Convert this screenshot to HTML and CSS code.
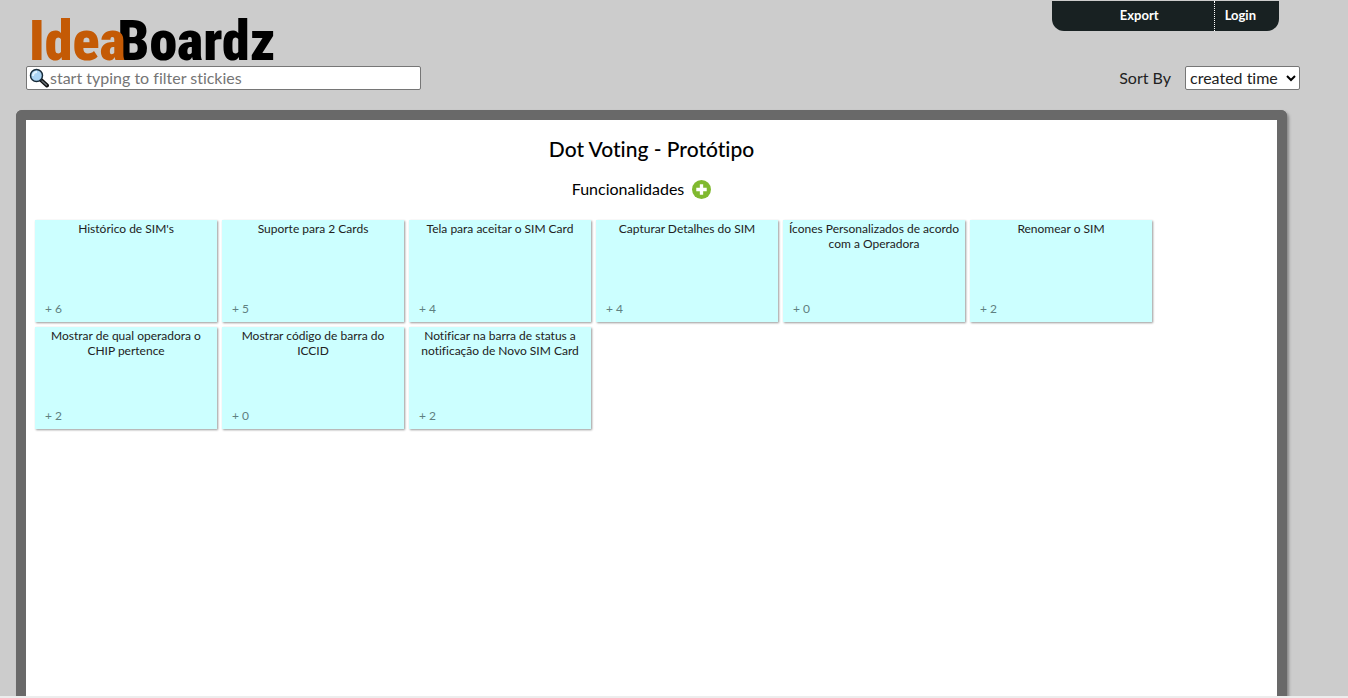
FILE: index.html
```html
<!DOCTYPE html>
<html lang="pt">
<head>
<meta charset="utf-8">
<title>IdeaBoardz</title>
<link rel="stylesheet" href="styles.css">
</head>
<body class="page">
<header class="header">
  <div class="header-top">
    <a class="logo" href="#"><span class="logo-idea">Idea</span><span class="logo-boardz">Boardz</span></a>
    <nav class="menu">
      <a class="menu-item menu-export" href="#">Export</a>
      <a class="menu-item menu-login" href="#">Login</a>
    </nav>
  </div>
  <div class="toolbar">
    <label class="search">
      <svg class="search-icon" viewBox="0 0 20 20" aria-hidden="true">
        <path d="M12 12l6 5.500" stroke="#111" stroke-width="4" stroke-linecap="round"/>
        <path d="M13 13l4.500 4" stroke="#6b7479" stroke-width="1.500" stroke-linecap="round"/>
        <circle cx="7.500" cy="7.500" r="6" fill="#acd5f5" stroke="#172b39" stroke-width="1.500"/>
        <path d="M4 8a4 4 0 0 1 4-4" fill="none" stroke="#e3f4ff" stroke-width="2"/>
      </svg>
      <input class="search-input" type="text" aria-label="Filter stickies" placeholder="start typing to filter stickies">
    </label>
    <div class="sort">
      <label class="sort-label" for="sort">Sort By</label>
      <span class="select-wrap">
        <select class="select" id="sort"><option>created time</option></select>
        <svg class="chevron" viewBox="0 0 10 8" aria-hidden="true"><path d="M1 2l4 4 4-4" fill="none" stroke="#000" stroke-width="2"/></svg>
      </span>
    </div>
  </div>
</header>
<main class="board">
  <h1 class="title">Dot Voting - Protótipo</h1>
  <div class="section">
    <h2 class="section-name">Funcionalidades</h2>
    <button class="add" type="button" aria-label="Add sticky">
      <svg class="add-icon" viewBox="0 0 20 20" aria-hidden="true"><circle cx="10" cy="10" r="10" fill="#80b92f"/><path d="M10 4.500v11M4.500 10h11" stroke="#fff" stroke-width="3.500"/></svg>
    </button>
  </div>
  <div class="stickies">
    <article class="sticky"><p class="text">Histórico de SIM's</p><button class="vote" type="button">+ 6</button></article>
    <article class="sticky"><p class="text">Suporte para 2 Cards</p><button class="vote" type="button">+ 5</button></article>
    <article class="sticky"><p class="text">Tela para aceitar o SIM Card</p><button class="vote" type="button">+ 4</button></article>
    <article class="sticky"><p class="text">Capturar Detalhes do SIM</p><button class="vote" type="button">+ 4</button></article>
    <article class="sticky"><p class="text">Ícones Personalizados de acordo com a Operadora</p><button class="vote" type="button">+ 0</button></article>
    <article class="sticky"><p class="text">Renomear o SIM</p><button class="vote" type="button">+ 2</button></article>
    <article class="sticky"><p class="text">Mostrar de qual operadora o CHIP pertence</p><button class="vote" type="button">+ 2</button></article>
    <article class="sticky"><p class="text">Mostrar código de barra do ICCID</p><button class="vote" type="button">+ 0</button></article>
    <article class="sticky"><p class="text">Notificar na barra de status a notificação de Novo SIM Card</p><button class="vote" type="button">+ 2</button></article>
  </div>
</main>
<footer class="strip"></footer>
</body>
</html>
```
FILE: styles.css
```css
* { box-sizing: border-box; }
.page {
  margin: 0;
  min-height: 100vh;
  display: flex;
  flex-direction: column;
  background: #ccc;
  color: #222;
  font-family: Lato, sans-serif;
  font-size: 16px;
  font-variant-ligatures: none;
}
.header { padding: 1px 48px 20px 26px; }
.header-top {
  display: flex;
  justify-content: space-between;
  align-items: flex-start;
  height: 65px;
}
.logo {
  padding: 12px 0 0 3px;
  font: 900 56px/56px "Roboto Condensed", Lato, sans-serif;
  text-decoration: none;
}
.logo-idea { position: relative; z-index: 1; color: #c45a05; }
.logo-boardz { margin-left: -8px; color: #000; }
.menu {
  display: flex;
  margin-right: 21px;
  border-radius: 0 0 12px 12px;
  background: #182122;
}
.menu-item {
  padding-bottom: 1px;
  color: #fff;
  font-size: 13px;
  font-weight: bold;
  line-height: 29px;
  text-decoration: none;
}
.menu-export { padding-left: 68px; padding-right: 55px; }
.menu-login { padding-left: 10px; padding-right: 23px; border-left: 1px dotted #fff; }
.toolbar { display: flex; justify-content: space-between; align-items: center; }
.search {
  display: flex;
  align-items: center;
  width: 395px;
  height: 24px;
  padding-left: 2px;
  border: 1px solid #767676;
  border-radius: 2px;
  background: #fff;
}
.search-icon { width: 20px; height: 20px; fill: none; }
.search-input {
  flex: 1;
  min-width: 0;
  height: 22px;
  padding: 0 1px 2px;
  border: 0;
  outline: 0;
  background: none;
  font: inherit;
}
.search-input::placeholder { color: #757575; }
.sort { display: flex; align-items: center; gap: 14px; }
.sort-label { padding-bottom: 2px; }
.select-wrap { position: relative; display: flex; }
.select {
  appearance: none;
  width: 115px;
  height: 24px;
  padding: 0 4px 2px;
  border: 1px solid #767676;
  border-radius: 2px;
  background: #fff;
  color: #222;
  font: inherit;
}
.chevron { position: absolute; right: 4px; top: 8px; width: 10px; height: 8px; pointer-events: none; }
.board {
  flex: 1;
  margin: 0 61px 0 16px;
  padding: 14px 9px 0;
  border: 10px solid #696969;
  border-bottom: 0;
  border-radius: 6px 6px 0 0;
  background: #fff;
  background-clip: padding-box;
  box-shadow: 2px 2px 3px #888;
}
.title {
  margin: 0;
  color: #000;
  font-size: 21px;
  font-weight: 500;
  line-height: 30px;
  text-align: center;
}
.section {
  display: flex;
  justify-content: center;
  align-items: center;
  gap: 8px;
  height: 20px;
  margin: 15px 0 21px;
  padding-right: 20px;
}
.section-name { margin: 0; color: #000; font-size: 16px; font-weight: 400; line-height: 20px; }
.add { display: flex; padding: 0; border: 0; background: none; }
.add-icon { width: 19px; height: 19px; }
.stickies { display: flex; flex-wrap: wrap; gap: 5px; }
.sticky {
  display: flex;
  flex-direction: column;
  justify-content: space-between;
  align-items: flex-start;
  width: 182px;
  min-height: 102px;
  padding: 1px 4px 6px;
  background: #cff;
  box-shadow: 1px 1px 2px #999;
}
.text { align-self: stretch; margin: 0; font-size: 12px; line-height: 15px; text-align: center; }
.vote {
  margin-left: 6px;
  padding: 0;
  border: 0;
  background: none;
  color: #5f8080;
  font: 12px/15px Lato, sans-serif;
}
.strip { height: 2px; background: #ededed; }
```
